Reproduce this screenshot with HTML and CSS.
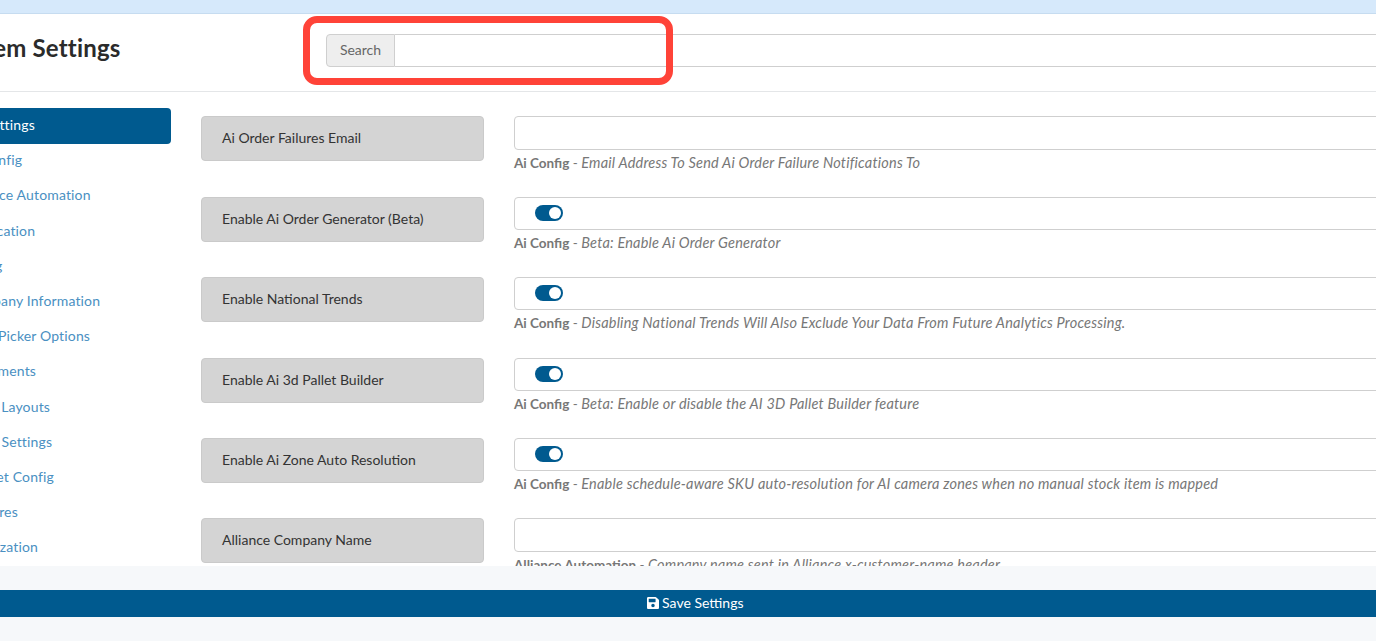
FILE: index.html
```html
<!DOCTYPE html>
<html lang="en">

<head>
      <meta charset="UTF-8">
      <meta name="viewport" content="width=device-width, initial-scale=1.0">
      <title>System Settings</title>
      <link rel="stylesheet" href="styles.css">
</head>

<body>
      <div class="topbar"></div>

      <div class="page">
            <div class="header">
                  <h1 class="title">System Settings</h1>
                  <div class="search">
                        <span class="searchLabel">Search</span>
                        <input class="searchInput" type="text">
                  </div>
            </div>

            <div class="main">
                  <div class="nav">
                        <a class="navLink active">All Settings</a>
                        <a class="navLink">Ai Config</a>
                        <a class="navLink">Alliance Automation</a>
                        <a class="navLink">Application</a>
                        <a class="navLink">Billing</a>
                        <a class="navLink">Company Information</a>
                        <a class="navLink">Date Picker Options</a>
                        <a class="navLink">Documents</a>
                        <a class="navLink">Label Layouts</a>
                        <a class="navLink">Email Settings</a>
                        <a class="navLink">Budget Config</a>
                        <a class="navLink">Features</a>
                        <a class="navLink">Localization</a>
                  </div>

                  <div class="settings">
                        <div class="row">
                              <div class="rowLabel">Ai Order Failures Email</div>
                              <div class="rowField">
                                    <input class="field" type="text">
                                    <p class="help"><b>Ai Config</b> - <i>Email Address To Send Ai Order Failure Notifications To</i></p>
                              </div>
                        </div>
                        <div class="row">
                              <div class="rowLabel">Enable Ai Order Generator (Beta)</div>
                              <div class="rowField">
                                    <div class="field"><span class="toggle"></span></div>
                                    <p class="help"><b>Ai Config</b> - <i>Beta: Enable Ai Order Generator</i></p>
                              </div>
                        </div>
                        <div class="row">
                              <div class="rowLabel">Enable National Trends</div>
                              <div class="rowField">
                                    <div class="field"><span class="toggle"></span></div>
                                    <p class="help"><b>Ai Config</b> - <i>Disabling National Trends Will Also Exclude Your Data From Future Analytics Processing.</i></p>
                              </div>
                        </div>
                        <div class="row">
                              <div class="rowLabel">Enable Ai 3d Pallet Builder</div>
                              <div class="rowField">
                                    <div class="field"><span class="toggle"></span></div>
                                    <p class="help"><b>Ai Config</b> - <i>Beta: Enable or disable the AI 3D Pallet Builder feature</i></p>
                              </div>
                        </div>
                        <div class="row">
                              <div class="rowLabel">Enable Ai Zone Auto Resolution</div>
                              <div class="rowField">
                                    <div class="field"><span class="toggle"></span></div>
                                    <p class="help"><b>Ai Config</b> - <i>Enable schedule-aware SKU auto-resolution for AI camera zones when no manual stock item is mapped</i></p>
                              </div>
                        </div>
                        <div class="row">
                              <div class="rowLabel">Alliance Company Name</div>
                              <div class="rowField">
                                    <input class="field" type="text">
                                    <p class="help"><b>Alliance Automation</b> - <i>Company name sent in Alliance x-customer-name header</i></p>
                              </div>
                        </div>
                  </div>
            </div>

            <div class="footer">
                  <button class="saveBtn" type="button">
                        <svg class="saveIcon" viewBox="0 0 448 512"><path fill="currentColor" d="M433.941 129.941l-83.882-83.882A48 48 0 0 0 316.118 32H48C21.49 32 0 53.49 0 80v352c0 26.51 21.49 48 48 48h352c26.51 0 48-21.49 48-48V163.882a48 48 0 0 0-14.059-33.941zM224 416c-35.346 0-64-28.654-64-64 0-35.346 28.654-64 64-64s64 28.654 64 64c0 35.346-28.654 64-64 64zm96-304.52V212c0 6.627-5.373 12-12 12H76c-6.627 0-12-5.373-12-12V108c0-6.627 5.373-12 12-12h228.52c3.183 0 6.235 1.264 8.485 3.515l3.48 3.48A11.996 11.996 0 0 1 320 111.48z"/></svg>
                        Save Settings
                  </button>
            </div>
      </div>

      <!-- red annotation drawn over the screenshot -->
      <div class="marker"></div>
</body>

</html>
```

FILE: styles.css
```css
/* page is scrolled sideways, so it starts left of the window */
html,
body {
      margin: 0;
      height: 641px;
      overflow: hidden;
}

body {
      background-color: #f6f8fa;
      font-family: "Lato", "Open Sans", sans-serif;
      color: #3a3a3a;
      position: relative;
}

.topbar {
      height: 13px;
      background-color: #d6e9fb;
      border-bottom: 1px solid #c6dcf0;
}

.page {
      width: 1510px;
      margin-left: -60px;
}

/* Header */
.header {
      height: 78px;
      box-sizing: border-box;
      background-color: white;
      border-bottom: 1px solid #e4e6e8;
      display: flex;
      align-items: flex-start;
}

.title {
      width: 386px;
      margin: 19px 0 0 0;
      font-size: 24px;
      line-height: 30px;
      font-weight: 700;
      letter-spacing: 0.2px;
      color: #2b2b2b;
      text-indent: 8px;
}

.search {
      flex: 1;
      display: flex;
      height: 33px;
      margin-top: 20px;
}

.searchLabel {
      width: 69px;
      box-sizing: border-box;
      background-color: #eeeeee;
      border: 1px solid #cfcfcf;
      border-radius: 4px 0 0 4px;
      font-size: 14px;
      line-height: 29px;
      text-align: center;
      color: #666;
}

.searchInput {
      flex: 1;
      border: 1px solid #cfcfcf;
      border-left: 0;
      outline: none;
}

/* Sidebar + settings list */
.main {
      height: 474px;
      overflow: hidden;
      background-color: white;
      display: flex;
}

.nav {
      width: 223px;
      margin-left: 8px;
      padding-top: 16px;
      flex-shrink: 0;
}

.navLink {
      display: block;
      height: 35.2px;
      padding-left: 16px;
      font-size: 14px;
      line-height: 34px;
      letter-spacing: 0.15px;
      color: #4a90c2;
}

.navLink.active {
      height: 36px;
      margin-bottom: -0.8px;
      background-color: #005a8f;
      border-radius: 4px;
      color: white;
}

.settings {
      margin-left: 30px;
      padding-top: 24.4px;
      flex: 1;
}

.row {
      height: 80.4px;
      display: flex;
}

.rowLabel {
      width: 283px;
      height: 45px;
      box-sizing: border-box;
      padding-left: 20px;
      background-color: #d4d4d4;
      border: 1px solid #cacaca;
      border-radius: 4px;
      font-size: 14px;
      line-height: 41px;
      color: #333;
      flex-shrink: 0;
}

.rowField {
      margin-left: 30px;
      flex: 1;
}

.field {
      display: block;
      width: 100%;
      height: 33px;
      box-sizing: border-box;
      border: 1px solid #cfcfcf;
      border-radius: 4px;
      background-color: white;
      padding: 7px 0 0 20px;
      outline: none;
}

input.field {
      height: 34px;
}

.toggle {
      display: block;
      width: 28px;
      height: 16px;
      border-radius: 8px;
      background-color: #005a8f;
      position: relative;
}

/* switch knob */
.toggle::after {
      content: "";
      position: absolute;
      top: 2px;
      right: 2px;
      width: 12px;
      height: 12px;
      border-radius: 50%;
      background-color: white;
}

.help {
      margin: 4px 0 0 0;
      font-size: 13.5px;
      line-height: 18px;
      color: #777;
      white-space: nowrap;
}

.help i {
      font-size: 14.5px;
      letter-spacing: 0.2px;
}

/* Footer */
.footer {
      padding-top: 24px;
}

.saveBtn {
      display: block;
      width: 100%;
      height: 27px;
      padding: 0 0 2px 0;
      border: 0;
      background-color: #005a8f;
      color: white;
      font-family: inherit;
      font-size: 14px;
}

.saveIcon {
      width: 12px;
      height: 14px;
      vertical-align: -2px;
}

/* Annotation */
.marker {
      position: absolute;
      left: 303px;
      top: 16px;
      width: 370px;
      height: 69px;
      box-sizing: border-box;
      border: 7px solid #ff4338;
      border-radius: 14px;
}
```
